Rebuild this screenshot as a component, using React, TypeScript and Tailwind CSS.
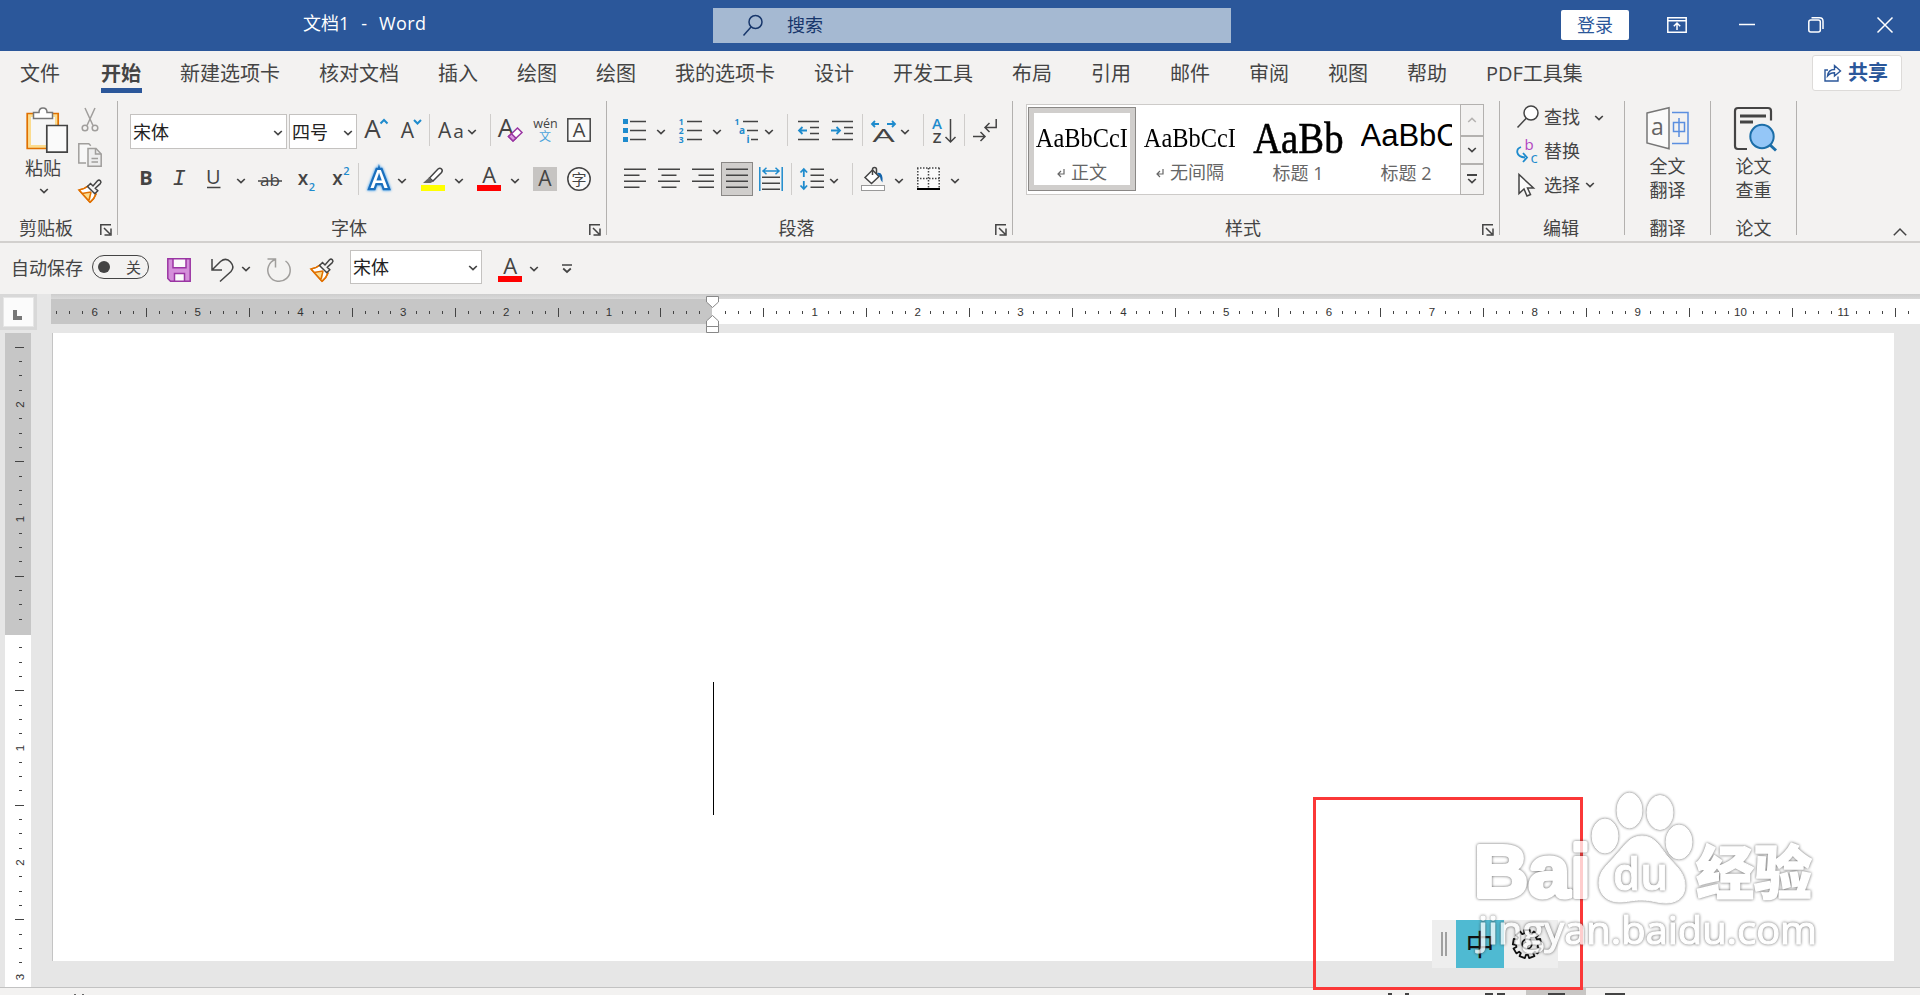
import type { ReactNode } from "react";

const tabs = ["新建选项卡", "核对文档", "插入", "绘图", "绘图", "我的选项卡", "设计", "开发工具", "布局", "引用", "邮件", "审阅", "视图", "帮助", "PDF工具集"];

const INK = "#444444";
const BLUE = "#1e8bcd";
const sans = "'Open Sans','Noto Sans CJK SC',sans-serif";

type IconProps = { children?: ReactNode; w?: number; h?: number; className?: string };

function Icon({ children, w = 24, h = 24, className = "" }: IconProps) {
  return (
    <svg width={w} height={h} viewBox={`0 0 ${w} ${h}`} fill="none" stroke={INK} strokeWidth="1.5" className={`shrink-0 overflow-visible ${className}`}>
      {children}
    </svg>
  );
}

type LetterProps = { x: number; y: number; size: number; fill?: string; weight?: number; anchor?: "start" | "middle"; italic?: boolean; family?: string; children: ReactNode };

function Letter({ x, y, size, fill = INK, weight = 400, anchor = "middle", italic, family = sans, children }: LetterProps) {
  return (
    <text x={x} y={y} fontSize={size} fill={fill} stroke="none" fontWeight={weight} textAnchor={anchor} fontStyle={italic ? "italic" : "normal"} fontFamily={family}>
      {children}
    </text>
  );
}

function Chevron({ className = "" }: { className?: string }) {
  return (
    <Icon w={10} h={6} className={className}>
      <path d="M1.2 1l3.8 3.6L8.8 1" strokeWidth="1.7" />
    </Icon>
  );
}

function Divider({ className = "" }: { className?: string }) {
  return <div className={`h-8 w-px shrink-0 bg-[#cfcdcb] ${className}`} />;
}

function Separator() {
  return <div className="h-[134px] w-px shrink-0 bg-[#b3b1af]" />;
}

function Combo({ text, className }: { text: string; className: string }) {
  return (
    <div className={`flex shrink-0 items-center justify-between border border-[#c4c2c0] bg-white pr-[3px] pl-[2px] text-lg leading-none text-[#222] ${className}`}>
      <span>{text}</span>
      <Chevron className="mt-0.5" />
    </div>
  );
}

function Launcher({ className = "" }: { className?: string }) {
  return (
    <Icon w={12} h={12} className={`mt-1 ${className}`}>
      <path d="M11 .8H.8V11" />
      <path d="M4 4l6 6M11 4.500V11H4.500" />
    </Icon>
  );
}

function GroupFooter({ label }: { label: string }) {
  return (
    <div className="mt-auto grid h-[27px] grid-cols-[1fr_auto_1fr] items-center pr-[5px] text-lg leading-none">
      <span />
      <span className="mr-[21px]">{label}</span>
      <Launcher className="justify-self-end" />
    </div>
  );
}

function Painter({ className = "" }: { className?: string }) {
  return (
    <Icon className={className}>
      <path d="M1 11c4-.5 6-1.500 9-4l8 8c-1 3-3 6-6 8.300z" fill="#fff" stroke="#e07000" />
      <path d="M4.500 14.500c3.500 0 6.500-.5 9-1.500l-1.500 9.800z" fill="#fbdc8f" stroke="none" />
      <path d="M1 11c4-.5 6-1.500 9-4M12 23.300c3-2.300 5-5.300 6-8.300M4 14.500l9-1.500M1 11l11 12.300M13 13l-2 8" stroke="#e07000" />
      <path d="M9.500 7.500L12.500 4.500 15 7 19.500 1.800q1.500-1.300 2.900 0 1.200 1.400-.1 2.800L17.300 9.300l2.500 2.500-3 3z" fill="#f3f2f1" />
    </Icon>
  );
}

function RedA({ className = "" }: { className?: string }) {
  return (
    <Icon className={className}>
      <Letter x={12.3} y={16} size={22}>A</Letter>
      <rect y="18" width="24" height="6" fill="#ff0000" stroke="none" />
    </Icon>
  );
}

function TitleBar() {
  return (
    <header className="flex h-[51px] items-start bg-[#2b579a] text-lg leading-none text-white">
      <div className="ml-[303px] flex w-[410px] gap-[12px] pt-[14px]">
        <span>文档1</span>
        <span>-</span>
        <span className="tracking-[0.4px]">Word</span>
      </div>
      <div className="mt-2 flex h-[35px] w-[518px] items-center bg-[#a5b9d2] text-[#17366b]">
        <Icon className="ml-[29px]">
          <g stroke="#17366b">
            <circle cx="13.500" cy="8" r="6.500" />
            <path d="M9 13L1.500 21.500" />
          </g>
        </Icon>
        <span className="mt-[-2px] ml-[21px]">搜索</span>
      </div>
      <button className="mt-2.5 ml-[330px] h-[30px] w-[68px] rounded-[2px] bg-white text-[#2b579a]">登录</button>
      <div className="mt-[17px] ml-[38px] flex items-center">
        <Icon w={20} h={16}>
          <g stroke="#fff">
            <path d="M.8.8h18.400v14.400H.8zM.8 3.800h18.400M10 13V6.500M6.800 9.200L10 6l3.200 3.200" />
          </g>
        </Icon>
        <Icon w={16} h={16} className="ml-[52px]"><path d="M0 7.500h16" stroke="#fff" /></Icon>
        <Icon w={16} h={16} className="ml-[53px]">
          <g stroke="#fff">
            <rect x=".8" y="3" width="11.500" height="12" rx="2" />
            <path d="M3.500.8h8q3.500 0 3.500 3.500V12" />
          </g>
        </Icon>
        <Icon w={16} h={16} className="ml-[53px]"><path d="M.5 .5l15 15M15.500 .5l-15 15" stroke="#fff" /></Icon>
      </div>
    </header>
  );
}

function TabBar() {
  return (
    <nav className="flex h-[50px] items-start text-xl leading-none">
      <span className="mt-[13px] ml-5">文件</span>
      <span className="mt-[13px] ml-[41px] flex h-[29px] w-[41px] flex-col border-b-[5px] border-[#2b579a] font-bold">开始</span>
      <div className="mt-[13px] ml-[38px] flex gap-[39px]">
        {tabs.map((t, i) => (
          <span key={i}>{t}</span>
        ))}
      </div>
      <button className="mt-1 mr-[18px] ml-auto flex h-9 w-[90px] items-center rounded-[3px] border border-[#dddbd9] bg-white pl-[11px] font-bold text-[#2b579a]">
        <Icon w={17} h={18}>
          <g stroke="#2b579a" strokeWidth="1.4">
            <path d="M4 6H1v11h13v-4.500" />
            <path d="M3.500 12c.5-4.500 3-6.500 7-6.500V1.500l6 5.500-6 5V8.800c-3 0-5 .7-7 3.200z" />
          </g>
        </Icon>
        <span className="ml-[7px]">共享</span>
      </button>
    </nav>
  );
}

function ClipboardGroup() {
  return (
    <section className="flex w-[117px] flex-col">
      <div className="flex">
        <div className="ml-[22px] flex w-[42px] flex-col items-center pt-1.5 text-lg leading-none">
          <Icon w={42} h={46} className="ml-[7px]">
            <path d="M1.200 6.500h31v35h-31z" fill="#fbdc8f" stroke="#e07000" strokeWidth="1.700" />
            <path d="M5 10h24v28H5z" fill="#f7f7f7" stroke="none" />
            <path d="M7.500 11.500V5.500h5.500c0-6 8-6 8 0h5.500v6z" fill="#fff" stroke="#777" />
            <path d="M20.800 18.500h20.400v26.700H20.800z" fill="#fafafa" strokeWidth="1.700" />
          </Icon>
          <span className="mt-[6px]">粘贴</span>
          <Chevron className="mt-[11px] ml-[2px]" />
        </div>
        <div className="ml-[14px] flex flex-col gap-3 pt-1.5">
          <Icon>
            <g stroke="#a09e9c">
              <path d="M7 1l8 17.500M17 1L9 18.500" />
              <circle cx="7" cy="21" r="2.800" />
              <circle cx="17" cy="21" r="2.800" />
            </g>
          </Icon>
          <Icon>
            <g stroke="#a09e9c">
              <path d="M8 20H.8V.8h10l2 2" fill="#f7f7f7" />
              <path d="M10 5.500h8l5.200 5.500v12.200H10z" fill="#ededed" />
              <path d="M17.500 5.500V11h5.700M13.500 15.500h6.500M13.500 19h6.500" />
            </g>
          </Icon>
          <Painter />
        </div>
      </div>
      <div className="mt-auto flex h-[27px] items-center justify-between pr-[5px] pl-[19px] text-lg leading-none">
        <span>剪贴板</span>
        <Launcher />
      </div>
    </section>
  );
}

function FontGroup() {
  return (
    <section className="flex w-[488px] flex-col pt-2.5">
      <div className="flex h-[38px] items-center">
        <Combo text="宋体" className="ml-3 h-[35px] w-[157px] self-end" />
        <Combo text="四号" className="ml-0.5 h-[35px] w-[68px] self-end" />
        <Icon className="ml-2">
          <Letter x={7.5} y={20} size={26}>A</Letter>
          <path d="M15.500 5.500L19 2l3.500 3.500" stroke={BLUE} strokeWidth="2" />
        </Icon>
        <Icon className="ml-3">
          <Letter x={6.5} y={20} size={21}>A</Letter>
          <path d="M13 2l3.500 3.500L20 2" stroke={BLUE} strokeWidth="2" />
        </Icon>
        <Divider className="ml-1" />
        <Icon w={26} className="ml-2">
          <Letter x={0} y={20} size={21} anchor="start">A</Letter>
          <Letter x={20.5} y={20} size={19}>a</Letter>
        </Icon>
        <Chevron className="mt-1 ml-[3px]" />
        <Divider className="ml-[13px]" />
        <Icon className="ml-2">
          <Letter x={7} y={19} size={26}>A</Letter>
          <path d="M9.500 18.500l9-8.500 4.500 4.500-9 8.500z" fill="#fff" stroke="#9a35a3" />
          <path d="M9.500 18.500l3-2.800 4.500 4.500-3 2.800z" fill="#d897dd" stroke="#9a35a3" />
        </Icon>
        <Icon className="ml-2.5">
          <Letter x={12.5} y={9.5} size={12.5}>wén</Letter>
          <Letter x={12} y={22.5} size={12} fill="#4aa3dc">文</Letter>
        </Icon>
        <Icon className="ml-2.5">
          <rect x=".8" y=".8" width="22.400" height="22.400" fill="#fafafa" />
          <Letter x={12} y={19} size={20}>A</Letter>
        </Icon>
      </div>
      <div className="mt-[11px] flex h-[38px] items-center">
        <Icon className="ml-[17px]"><Letter x={11} y={18} size={20} weight={700}>B</Letter></Icon>
        <Icon className="ml-2"><Letter x={12} y={18} size={22} italic family="'Liberation Mono',monospace">I</Letter></Icon>
        <Icon className="ml-2.5">
          <Letter x={12.3} y={17} size={20}>U</Letter>
          <path d="M6 20.500h13.500" />
        </Icon>
        <Chevron className="mt-1 ml-[11px]" />
        <Icon className="ml-3">
          <Letter x={12} y={19} size={17}>ab</Letter>
          <path d="M0 14h24" />
        </Icon>
        <Icon className="ml-[15px]">
          <Letter x={6} y={18} size={19} weight={600}>x</Letter>
          <Letter x={15} y={24} size={11} weight={600} fill={BLUE}>2</Letter>
        </Icon>
        <Icon className="ml-[11px]">
          <Letter x={5.5} y={18} size={19} weight={600}>x</Letter>
          <Letter x={14.5} y={8} size={11} weight={600} fill={BLUE}>2</Letter>
        </Icon>
        <Divider className="ml-0.5" />
        <Icon className="ml-2 [filter:drop-shadow(0_0_1px_#6db4ee)_drop-shadow(0_0_1px_#8ec4f0)]">
          <text x="12" y="20.500" fontSize="26" fontWeight="600" textAnchor="middle" fontFamily={sans} fill="#fff" stroke="#1a6fbd" strokeWidth="4.500" style={{ paintOrder: "stroke" }}>A</text>
        </Icon>
        <Chevron className="mt-1 ml-1.5" />
        <Icon className="ml-3.5">
          <path d="M8.500 11L17 2q2-1.500 3.500 0t0 3.500L12 14z" fill="#fff" />
          <path d="M8 10.500l4.500 4-3 1.500H2z" fill="#666" stroke="none" />
          <rect y="18" width="24" height="6" fill="#ffff00" stroke="none" />
        </Icon>
        <Chevron className="mt-1 ml-[9px]" />
        <RedA className="ml-[13px]" />
        <Chevron className="mt-1 ml-[9px]" />
        <Icon className="ml-[13px]">
          <rect width="24" height="24" fill="#c6c4c2" stroke="none" />
          <Letter x={12} y={19} size={21}>A</Letter>
        </Icon>
        <Icon className="ml-2.5">
          <circle cx="12" cy="12" r="11.200" fill="#fafafa" />
          <Letter x={12} y={17.5} size={15}>字</Letter>
        </Icon>
      </div>
      <GroupFooter label="字体" />
    </section>
  );
}

function ParagraphGroup() {
  return (
    <section className="flex w-[405px] flex-col pt-2.5">
      <div className="flex h-[38px] items-center">
        <Icon className="ml-4">
          <path d="M7 3.500h16M7 12.500h16M7 21.500h16" />
          <path d="M0 1h5v5H0zM0 10h5v5H0zM0 19h5v5H0z" fill={BLUE} stroke="none" />
        </Icon>
        <Chevron className="mt-1 ml-[9px]" />
        <Icon className="ml-[13px]">
          <path d="M8 3.500h15M8 12.500h15M8 21.500h15" />
          <Letter x={2.2} y={6.5} size={8.5} weight={700} fill={BLUE}>1</Letter>
          <Letter x={2.2} y={15.5} size={8.5} weight={700} fill={BLUE}>2</Letter>
          <Letter x={2.2} y={24.5} size={8.5} weight={700} fill={BLUE}>3</Letter>
        </Icon>
        <Chevron className="mt-1 ml-[9px]" />
        <Icon className="ml-[13px]">
          <path d="M8 3.500h15M12 12.500h11M16 21.500h7" />
          <Letter x={2} y={6.5} size={8.5} weight={700} fill={BLUE}>1</Letter>
          <Letter x={7} y={15.5} size={10} weight={700} fill={BLUE}>a</Letter>
          <Letter x={13} y={24.5} size={10} weight={700} fill={BLUE}>i</Letter>
        </Icon>
        <Chevron className="mt-1 ml-[5px]" />
        <Divider className="ml-[13px]" />
        <Icon className="ml-[9px]">
          <path d="M1 3.500h21M13 9.500h9M13 15.500h9M1 21.500h21" />
          <path d="M10 12.500H2M5.500 9L2 12.500 5.500 16" stroke={BLUE} strokeWidth="1.800" />
        </Icon>
        <Icon className="ml-2.5">
          <path d="M1 3.500h21M13 9.500h9M13 15.500h9M1 21.500h21" />
          <path d="M0 12.500h9M5.500 9L9 12.500 5.500 16" stroke={BLUE} strokeWidth="1.800" />
        </Icon>
        <Divider className="ml-[7px]" />
        <Icon className="ml-[9px]">
          <g transform="translate(11.500 23.500) scale(1.850 1)"><Letter x={0} y={0} size={19}>A</Letter></g>
          <path d="M7 6H0M3 3L0 6l3 3M15 6h8M20 3l3 3-3 3" stroke={BLUE} strokeWidth="1.800" />
        </Icon>
        <Chevron className="mt-1 ml-1" />
        <Divider className="ml-[13px]" />
        <Icon className="ml-2">
          <Letter x={5} y={11} size={15} weight={600} fill={BLUE}>A</Letter>
          <Letter x={5} y={25} size={15} weight={600}>Z</Letter>
          <path d="M18.500 1v23M13.500 19l5 5 5-5" />
        </Icon>
        <Divider className="ml-2" />
        <Icon className="ml-2">
          <path d="M23.200 1v8.500H12M16.500 5L12 9.500l4.500 4.500M0 18.500h12M7.500 14l4.500 4.500L7.500 23" />
        </Icon>
      </div>
      <div className="mt-[11px] flex h-[38px] items-center">
        <Icon className="ml-4"><path d="M1 2.300h22M1 8.300h15.500M1 14.300h22M1 20.300h15.500" /></Icon>
        <Icon className="ml-2.5"><path d="M1 2.300h22M4.500 8.300h15M1 14.300h22M4.500 20.300h15" /></Icon>
        <Icon className="ml-2.5"><path d="M1 2.300h22M7.500 8.300H23M1 14.300h22M7.500 20.300H23" /></Icon>
        <div className="ml-1.5 flex h-[34px] w-8 items-center justify-center border border-[#8a8886] bg-[#d0cecc]">
          <Icon><path d="M1 2.300h22M1 8.300h22M1 14.300h22M1 20.300h22" /></Icon>
        </div>
        <Icon className="ml-1.5">
          <path d="M3 10.300h18M3 16.300h18M3 22.300h18" />
          <path d="M.8 0v24M23.200 0v24M4 4h16M7.500.8L4 4l3.500 3.200M16.500.8L20 4l-3.500 3.200" stroke={BLUE} />
        </Icon>
        <Divider className="ml-2" />
        <Icon className="ml-2">
          <path d="M10.500 2.300H24M10.500 8.300H24M10.500 14.300H24M10.500 20.300H24" />
          <path d="M3.800 2v8M.5 5.500L3.800 2l3.300 3.500M3.800 14v8M.5 18.500L3.800 22l3.300-3.500" stroke={BLUE} strokeWidth="1.800" />
        </Icon>
        <Chevron className="mt-1 ml-[5px]" />
        <Divider className="ml-[13px]" />
        <Icon className="ml-2">
          <path d="M4 10.500L11.500 3l6.500 6.500-7.500 7z" fill="#fff" />
          <path d="M11.500 8V2.500q0-2 2-2t2 2V7" />
          <path d="M16 6q6.500-1.500 5.500 9.500Q19.500 14 19 10z" fill="#1565ab" stroke="none" />
          <rect x=".5" y="18.500" width="23" height="5" fill="#fff" stroke="#999" strokeWidth="1" />
        </Icon>
        <Chevron className="mt-1 ml-[9px]" />
        <Icon className="ml-[13px]">
          <rect width="23" height="22" fill="#fafafa" stroke="none" />
          <path d="M0 1h23M0 11.500h23M.8 1v20M11.500 1v20M22.200 1v20" strokeDasharray="1.500 1.500" />
          <path d="M0 22h23" stroke="#000" strokeWidth="2" />
        </Icon>
        <Chevron className="mt-1 ml-[9px]" />
      </div>
      <GroupFooter label="段落" />
    </section>
  );
}

function ReturnMark() {
  return (
    <Icon w={8} h={8} className="mt-1.5 mr-[6px]">
      <path d="M7 0v5H1.500M4 2L1 5l3 3" stroke="#666" strokeWidth="1.200" />
    </Icon>
  );
}

function StylesGroup() {
  return (
    <section className="flex w-[486px] flex-col pt-[3px]">
      <div className="ml-[13px] flex h-[91px] w-[458px] border border-[#cdcbc9] bg-white text-lg leading-none text-[#666]">
        <div className="mt-0.5 ml-px flex h-[84px] w-[108px] flex-col items-center border border-[#8a8886] bg-[#d0cecc] p-[5px]">
          <div className="flex h-full w-full flex-col items-center bg-white">
            <span className="mt-[12px] origin-center scale-x-[0.87] font-['Liberation_Serif'] text-[28px] leading-[26px] text-black">AaBbCcI</span>
            <span className="mt-[12px] flex"><ReturnMark />正文</span>
          </div>
        </div>
        <div className="mt-[20px] flex w-[108px] flex-col items-center">
          <span className="scale-x-[0.87] font-['Liberation_Serif'] text-[28px] leading-[26px] text-black">AaBbCcI</span>
          <span className="mt-[12px] flex"><ReturnMark />无间隔</span>
        </div>
        <div className="mt-[14px] flex w-[108px] flex-col items-center">
          <span className="scale-x-[0.88] font-['Liberation_Serif'] text-[44px] leading-[40px] text-black [-webkit-text-stroke:0.6px_#000]">AaBb</span>
          <span className="mt-[5px]">标题 1</span>
        </div>
        <div className="mt-[11px] flex w-[108px] flex-col items-center">
          <span className="w-[91px] overflow-hidden font-['Liberation_Sans'] text-[31px] leading-[40px] text-black">AaBbC</span>
          <span className="mt-[8px]">标题 2</span>
        </div>
        <div className="-my-px -mr-px ml-auto flex w-6 flex-col border border-[#b3b1af] bg-[#f3f2f1]">
          <div className="flex flex-1 items-center justify-center"><Icon w={10} h={6}><path d="M1.200 5L5 1.400 8.800 5" stroke="#b5b3b1" /></Icon></div>
          <div className="flex h-[30px] items-center justify-center border-y-2 border-[#b3b1af]"><Chevron /></div>
          <div className="flex flex-1 items-center justify-center">
            <Icon w={10} h={10}><path d="M0 1h10" strokeWidth="2" /><path d="M1.200 5L5 8.600 8.800 5" strokeWidth="1.700" /></Icon>
          </div>
        </div>
      </div>
      <GroupFooter label="样式" />
    </section>
  );
}

function EditGroup() {
  return (
    <section className="flex w-[124px] flex-col text-lg leading-none">
      <div className="flex h-[34px] items-center pl-4">
        <Icon className="mt-[-3px]">
          <circle cx="15" cy="8" r="7" fill="#fff" />
          <path d="M10.500 13L1.500 22.500" />
        </Icon>
        <span className="mt-[-3px] ml-1">查找</span>
        <Chevron className="ml-[14px]" />
      </div>
      <div className="flex h-[34px] items-center pl-4">
        <Icon className="mt-[-2px]">
          <Letter x={13} y={11} size={15} fill="#b146c2">b</Letter>
          <Letter x={18} y={24} size={15} fill={BLUE}>c</Letter>
          <path d="M5 8C-.5 10-.5 18 9 18.500M7 14l4 4.500L7 23" stroke={BLUE} strokeWidth="1.800" />
        </Icon>
        <span className="mt-[-2px] ml-1">替换</span>
      </div>
      <div className="flex h-[34px] items-center pl-4">
        <Icon className="mt-[-2px]">
          <path d="M3 1.500v19l5-4.500 3 7 3.500-1.500-3-6.500h6z" fill="#fafafa" />
        </Icon>
        <span className="mt-[-2px] ml-1">选择</span>
        <Chevron className="mt-[-2px] ml-[5px]" />
      </div>
      <div className="mt-auto flex h-[27px] items-center pl-[43px]">编辑</div>
    </section>
  );
}

function BigButton({ lines, label, children }: { lines: string[]; label: string; children: ReactNode }) {
  return (
    <section className="flex w-[85px] flex-col items-center text-lg leading-none">
      <div className="h-[54px] pt-1.5">{children}</div>
      {lines.map((l) => (
        <span key={l} className="h-[23.500px] pt-[2px]">{l}</span>
      ))}
      <div className="mt-auto flex h-[27px] items-center">{label}</div>
    </section>
  );
}

function Ribbon() {
  return (
    <div className="flex h-[142px] border-b-2 border-[#d2d0ce]">
      <ClipboardGroup />
      <Separator />
      <FontGroup />
      <Separator />
      <ParagraphGroup />
      <Separator />
      <StylesGroup />
      <Separator />
      <EditGroup />
      <Separator />
      <BigButton lines={["全文", "翻译"]} label="翻译">
        <Icon w={43} h={43}>
          <path d="M1 6L23 .8v41L1 36z" fill="#fafafa" stroke="#777" />
          <path d="M26 5.500h16v31H26" stroke="#5b8fe0" />
          <Letter x={11.5} y={28} size={23} fill="#666">a</Letter>
          <path d="M27.500 15.500h11v9h-11zM33 11v19" stroke="#5b8fe0" />
        </Icon>
      </BigButton>
      <Separator />
      <BigButton lines={["论文", "查重"]} label="论文">
        <Icon w={43} h={44} className="ml-[4px]">
          <path d="M13 42H4q-3 0-3-3V4q0-3 3-3h30q3 0 3 3v9.500" strokeWidth="2.200" />
          <path d="M6 9h26M6 15h13" strokeWidth="3" />
          <path d="M35 37l7 6.500" stroke="#1c6ea8" strokeWidth="3" />
          <circle cx="28" cy="29.500" r="11.700" fill="#94c6f7" stroke="#1c6ea8" strokeWidth="2" />
        </Icon>
      </BigButton>
      <Separator />
      <Icon w={14} h={8} className="mt-auto mr-[13px] mb-[5px] ml-auto"><path d="M.8 7.200L7 1l6.200 6.200" /></Icon>
    </div>
  );
}

function QuickAccess() {
  return (
    <div className="flex h-[51px] items-center pl-[11px] text-lg leading-none">
      <span className="mt-[-2px] w-[73px]">自动保存</span>
      <div className="mt-[-3px] ml-2 flex h-6 w-[57px] items-center justify-between rounded-full border-[1.5px] border-[#444] pr-[7px] pl-[5px] text-[15px]">
        <span className="size-3 rounded-full bg-[#444]" />
        <span>关</span>
      </div>
      <Icon className="mt-[3px] ml-[18px]">
        <path d="M.8.8h22.400v22.400H3.500L.8 20.500z" fill="#d48fda" stroke="#9a35a3" />
        <path d="M6 .8h13v9H6zM7.500 15.500h10v7.700h-10z" fill="#fafafa" stroke="#9a35a3" />
      </Icon>
      <Icon className="mt-[3px] ml-5">
        <path d="M1 1v11h10M1.500 11.500L9.500 3.500Q15-1 19.500 4t.5 9.500L9 23.500" />
      </Icon>
      <Chevron className="mt-px ml-1.5" />
      <Icon className="mt-[3px] ml-4">
        <path d="M.5 1h8v8.500M8.500 1.500A11.200 11.200 0 1 0 18.500 3" stroke="#a09e9c" />
      </Icon>
      <Painter className="mt-[3px] ml-[19px]" />
      <Combo text="宋体" className="mt-[-3px] ml-4 h-[34px] w-[132px]" />
      <RedA className="mt-[3px] ml-4" />
      <Chevron className="mt-px ml-[7px]" />
      <Icon w={10} h={9} className="ml-[23px]"><path d="M0 1h10M1.200 4.500L5 8l3.800-3.500" strokeWidth="1.700" /></Icon>
    </div>
  );
}

const H_UNIT = 102.86;
const V_UNIT = 114.5;

// eighth-of-an-inch marks counted from the origin
function marks(from: number, to: number) {
  const out: number[] = [];
  for (let i = from; i <= to; i++) if (i !== 0) out.push(i);
  return out;
}

function HorizontalRuler() {
  const origin = 660.9;
  return (
    <svg width="1869" height="25" className="block" shapeRendering="crispEdges">
      <rect width="661" height="25" fill="#c6c6c6" />
      <rect x="661" width="1208" height="25" fill="#fff" />
      {marks(-51, 93).map((i) => {
        const x = origin + (i * H_UNIT) / 8;
        if (i % 8 === 0)
          return (
            <text key={i} x={x} y="17" fontSize="11.500" textAnchor="middle" fill="#333" fontFamily="'Liberation Sans',sans-serif">{Math.abs(i / 8)}</text>
          );
        return i % 4 === 0 ? <rect key={i} x={Math.round(x)} y="9" width="1" height="9" fill="#444" /> : <rect key={i} x={Math.round(x)} y="12" width="1" height="3" fill="#444" />;
      })}
    </svg>
  );
}

function VerticalRuler() {
  const origin = 300;
  return (
    <svg width="26" height="654" className="ml-[5px] block" shapeRendering="crispEdges">
      <rect width="26" height="302" fill="#c6c6c6" />
      <rect y="302" width="26" height="352" fill="#fff" />
      {marks(-20, 24).map((i) => {
        const y = origin + (i * V_UNIT) / 8;
        if (i % 8 === 0)
          return (
            <text key={i} transform={`translate(18.500 ${y + 0.5}) rotate(-90)`} fontSize="11.500" textAnchor="middle" fill="#333" fontFamily="'Liberation Sans',sans-serif">{Math.abs(i / 8)}</text>
          );
        return i % 4 === 0 ? <rect key={i} x="10" y={Math.round(y)} width="9" height="1" fill="#444" /> : <rect key={i} x="14" y={Math.round(y)} width="3" height="1" fill="#444" />;
      })}
    </svg>
  );
}

function IndentMarker() {
  return (
    <svg width="14" height="37" viewBox="0 0 14 37" className="absolute top-[2px] left-[706px]" fill="#fff" stroke="#888">
      <path d="M.5.5h12V6l-6 5.500L.5 6z" />
      <path d="M.5 30.500V25l6-5.500 6 5.500v5.500zM.5 30.500h12v6H.5z" />
    </svg>
  );
}

function GearIcon() {
  const teeth = 9;
  const pts: string[] = [];
  for (let i = 0; i < teeth; i++) {
    const a = ((i + 0.5) / teeth) * Math.PI * 2 + Math.PI / 2;
    [[-0.25, 11], [-0.2, 14.2], [0.2, 14.2], [0.25, 11]].forEach(([d, r]) => {
      pts.push(`${(15 + Math.cos(a + d) * r).toFixed(2)},${(15 + Math.sin(a + d) * r).toFixed(2)}`);
    });
  }
  return (
    <Icon w={30} h={30}>
      <polygon points={pts.join(" ")} stroke="#111" strokeWidth="1.800" strokeLinejoin="round" />
      <circle cx="15" cy="15" r="4.800" stroke="#111" strokeWidth="1.800" />
    </Icon>
  );
}

function ImeBar() {
  return (
    <div className="absolute top-[626px] left-[1432px] flex h-12 w-[126px] items-center bg-[#eeeeee]">
      <div className="ml-[9px] h-6 w-[6px] border-x-2 border-[#a0a0a0]" />
      <div className="ml-[9px] flex h-12 w-12 items-center justify-center bg-[#4fbad2] text-[29px] leading-none text-[#111]">中</div>
      <div className="ml-2"><GearIcon /></div>
    </div>
  );
}

function Watermark() {
  return (
    <svg
      width="350"
      height="190"
      viewBox="0 0 350 190"
      className="absolute top-[479px] left-[1472px] overflow-visible"
      fontFamily={sans}
      fill="#fff"
      stroke="#fff"
      strokeLinejoin="round"
      opacity=".75"
    >
      <g className="[filter:drop-shadow(0_0_1.500px_#333)]">
        <text x="2" y="124" fontSize="75" fontWeight="700" strokeWidth="4" textLength="117" lengthAdjust="spacingAndGlyphs" fontFamily="'Liberation Sans',sans-serif">Bai</text>
        <text x="224" y="121" fontSize="58" fontWeight="900" strokeWidth="1.500" textLength="116" lengthAdjust="spacingAndGlyphs" fontFamily="'Noto Sans CJK SC',sans-serif">经验</text>
        <ellipse cx="133" cy="63" rx="13" ry="17" />
        <ellipse cx="157.500" cy="37.500" rx="12.500" ry="17.500" />
        <ellipse cx="188" cy="39.500" rx="13" ry="17" />
        <ellipse cx="207" cy="69" rx="13" ry="17" />
        <path d="M170 63c12 0 17 9 25 20 10 11 18 17 18 30 0 12-9 17-19 17-9 0-14-3-24-3s-14 2-23 2c-12 0-20-8-20-19 0-13 9-18 18-29 8-9 13-18 25-18z" />
        <text x="6" y="171" fontSize="39" strokeWidth="1.200" textLength="339" lengthAdjust="spacingAndGlyphs">jingyan.baidu.com</text>
      </g>
      <g className="[filter:drop-shadow(0_0_1.500px_#333)]">
        <text x="141" y="117" fontSize="46" fontWeight="600" strokeWidth="1" textLength="55" lengthAdjust="spacingAndGlyphs">du</text>
      </g>
    </svg>
  );
}

function StatusBar() {
  return (
    <footer className="flex h-2 items-end border-t border-[#c2c2c2] bg-[#f3f2f1]">
      <div className="ml-[74px] h-px w-2.5 border-x-2 border-[#666]" />
      <div className="ml-[1304px] h-0.5 w-[21px] border-x-4 border-[#444]" />
      <div className="ml-[76px] h-0.5 w-5 border-x-[8px] border-[#444]" />
      <div className="ml-[21px] flex h-[7px] w-[60px] items-end justify-center bg-[#c8c6c4]">
        <div className="h-0.5 w-[17px] bg-[#444]" />
      </div>
      <div className="ml-[19px] h-0.5 w-5 bg-[#444]" />
    </footer>
  );
}

export default function App() {
  return (
    <div className="flex h-[995px] w-[1920px] flex-col overflow-hidden bg-[#f3f2f1] font-['Open_Sans','Noto_Sans_CJK_SC',sans-serif] text-[#444]">
      <TitleBar />
      <TabBar />
      <Ribbon />
      <QuickAccess />
      <main className="relative flex h-[693px] bg-[#e6e6e6]">
        <div className="w-[51px] shrink-0">
          <div className="h-[36px] w-[37px] bg-[#d8d8d8] pt-[3px] pl-[3px]">
            <div className="h-[30px] w-[31px] border border-[#e6e6e6] bg-[#fbfbfb] pt-3 pl-[9px]">
              <div className="h-[10px] w-[9px] border-b-4 border-l-4 border-[#777]" />
            </div>
          </div>
          <div className="pt-[3px]">
            <VerticalRuler />
          </div>
        </div>
        <div className="flex-1">
          <div className="h-[5px] bg-linear-to-b from-[#cdcdcd] to-[#dadada]" />
          <HorizontalRuler />
          <div className="mt-[9px] ml-px h-[628px] w-[1842px] border-l border-[#c4c4c4] bg-white" />
        </div>
        <IndentMarker />
        <div className="absolute top-[388px] left-[713px] h-[133px] w-px bg-black" />
        <ImeBar />
        <div className="absolute top-[503px] left-[1313px] h-[193px] w-[270px] border-[3px] border-[#fb3838]" />
        <Watermark />
      </main>
      <StatusBar />
    </div>
  );
}
